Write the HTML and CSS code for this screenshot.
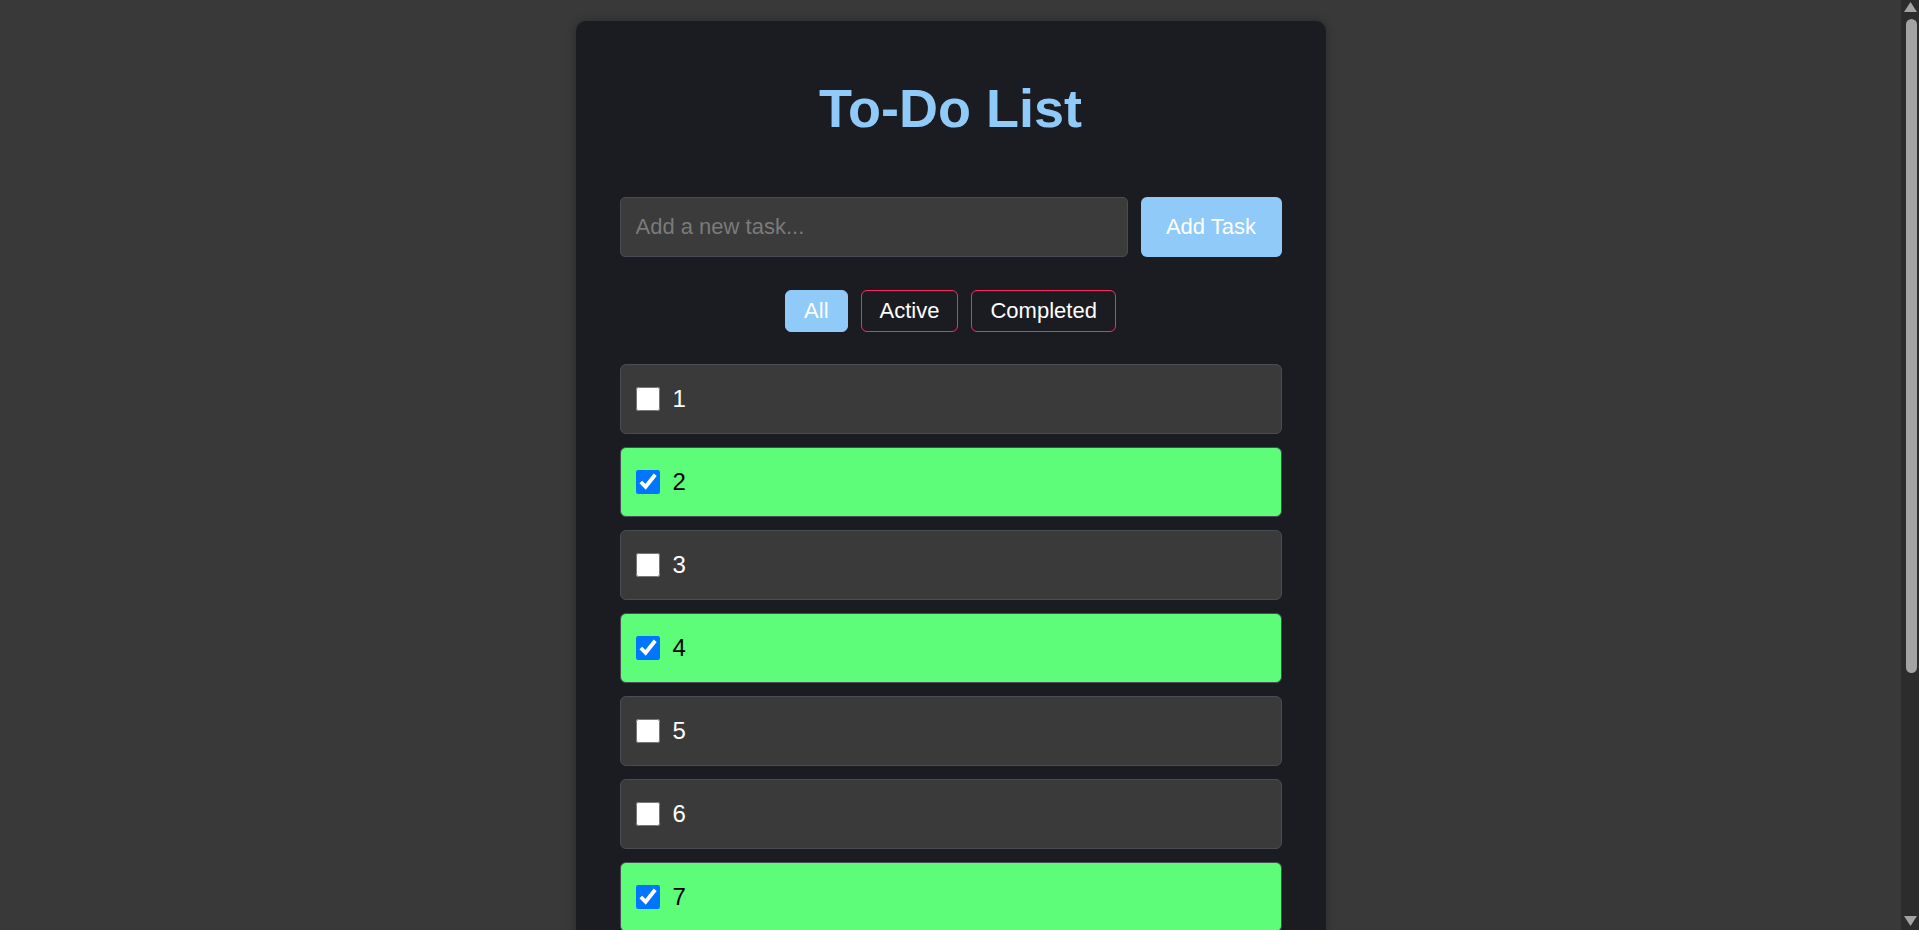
FILE: index.html
```html
<!DOCTYPE html>
<html lang="en">
<head>
    <meta charset="UTF-8">
    <meta name="viewport" content="width=device-width, initial-scale=1.0">
    <title>To-Do List</title>
    <link rel="stylesheet" href="styles.css">
</head>
<body>
    <div class="todo-container">
        <h1>To-Do List</h1>
        <div class="input-row">
            <input type="text" id="task-input" placeholder="Add a new task...">
            <button class="add-btn">Add Task</button>
        </div>
        <div class="filters">
            <button class="filter-btn active">All</button>
            <button class="filter-btn">Active</button>
            <button class="filter-btn">Completed</button>
        </div>
        <ul class="task-list">
            <li class="task"><input type="checkbox"><span>1</span></li>
            <li class="task done"><input type="checkbox" checked><span>2</span></li>
            <li class="task"><input type="checkbox"><span>3</span></li>
            <li class="task done"><input type="checkbox" checked><span>4</span></li>
            <li class="task"><input type="checkbox"><span>5</span></li>
            <li class="task"><input type="checkbox"><span>6</span></li>
            <li class="task done"><input type="checkbox" checked><span>7</span></li>
            <li class="task"><input type="checkbox"><span>8</span></li>
            <li class="task done"><input type="checkbox" checked><span>9</span></li>
            <li class="task"><input type="checkbox"><span>10</span></li>
        </ul>
    </div>

    <!-- scrollbar stand-in, the headless window hides the real one -->
    <div class="fake-scrollbar">
        <svg class="arrow" width="13" height="10" viewBox="0 0 13 10"><polygon points="6.5,0 13,10 0,10" fill="#a3a3a3"/></svg>
        <div class="thumb"></div>
        <svg class="arrow down" width="13" height="10" viewBox="0 0 13 10"><polygon points="0,0 13,0 6.5,10" fill="#a3a3a3"/></svg>
    </div>
</body>
</html>
```

FILE: styles.css
```css
body {
    display: flex;
    justify-content: center;
    margin: 0;
    padding: 21px 18px 21px 0;
    font-family: "Liberation Sans", Arial, sans-serif;
    background-color: #393939;
}
.fake-scrollbar {
    position: fixed;
    top: 0;
    right: 0;
    width: 18px;
    height: 100vh;
    background-color: #2c2c2c;
    display: flex;
    flex-direction: column;
    align-items: center;
}
.fake-scrollbar .arrow {
    margin-top: 2px;
}
.fake-scrollbar .arrow.down {
    margin-top: auto;
    margin-bottom: 4px;
}
.fake-scrollbar .thumb {
    width: 11px;
    height: 654px;
    margin-top: 7px;
    margin-left: 2px;
    background-color: #a3a3a3;
    border-radius: 6px;
}
.todo-container {
    width: 750px;
    box-sizing: border-box;
    padding: 44px;
    background-color: #1b1c21;
    border-radius: 10px;
    box-shadow: 0 0 10px rgba(0,0,0,0.3);
}
h1 {
    margin: 12px 0 58px;
    text-align: center;
    font-size: 54px;
    color: #90caf9;
}
.input-row {
    display: flex;
    gap: 13px;
}
#task-input {
    flex: 1;
    height: 60px;
    box-sizing: border-box;
    padding: 0 15px;
    font-family: inherit;
    font-size: 22px;
    color: #fff;
    background-color: #3b3b3b;
    border: 1px solid #464b56;
    border-radius: 5px;
    outline: none;
}
#task-input::placeholder {
    color: #7a7a7a;
}
.add-btn {
    width: 141px;
    height: 60px;
    font-family: inherit;
    font-size: 22px;
    color: #fff;
    background-color: #90caf9;
    border: none;
    border-radius: 6px;
    cursor: pointer;
}
.filters {
    display: flex;
    justify-content: center;
    gap: 13px;
    margin: 33px 0 32px;
}
.filter-btn {
    padding: 7px 18px;
    font-family: inherit;
    font-size: 22px;
    color: #fff;
    background-color: transparent;
    border: 1px solid #ff2a5c;
    border-radius: 6px;
    cursor: pointer;
}
.filter-btn.active {
    background-color: #90caf9;
    border-color: #90caf9;
}
.task-list {
    list-style: none;
    margin: 0;
    padding: 0;
}
.task {
    display: flex;
    align-items: center;
    gap: 13px;
    margin-bottom: 13.4px;
    padding: 19.8px 15px;
    font-size: 24px;
    color: #fff;
    background-color: #3a3a3a;
    border: 1px solid #484c55;
    border-radius: 6px;
}
.task:last-child {
    margin-bottom: 0;
}
.task input {
    width: 24px;
    height: 24px;
    margin: 0;
}
.task.done {
    color: #000;
    background-color: #5dfd79;
}
```
